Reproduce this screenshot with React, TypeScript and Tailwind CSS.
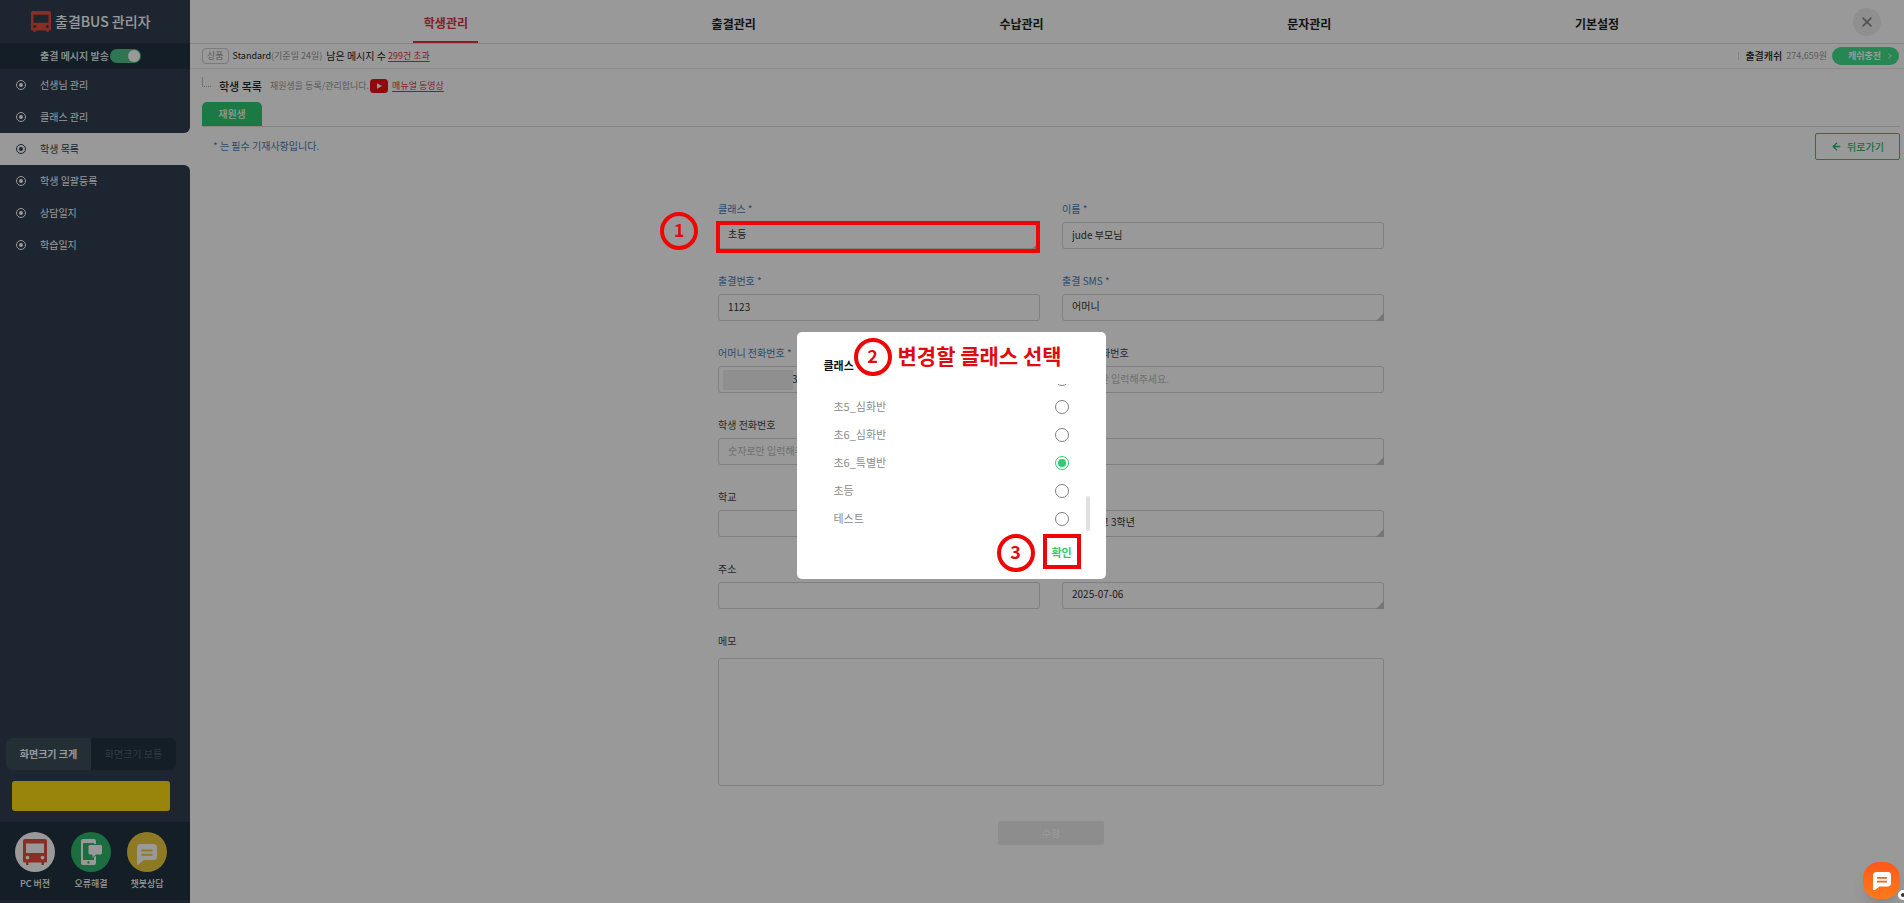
import React, { useState } from "react";
import { FiArrowLeft, FiChevronRight } from "react-icons/fi";
import { IoClose } from "react-icons/io5";

interface IField {
    id: string,
    label: string,
    kind: "text" | "select" | "masked",
    value?: string,
    placeholder?: string,
    required?: boolean,
    step?: string
}

const menuItems: string[] = ["학생관리", "출결관리", "수납관리", "문자관리", "기본설정"];

const sideItems = [
    { title: "선생님 관리", shape: "" },
    { title: "클래스 관리", shape: "rounded-br-md" },
    { title: "학생 목록", active: true, shape: "" },
    { title: "학생 일괄등록", shape: "rounded-tr-md" },
    { title: "상담일지", shape: "" },
    { title: "학습일지", shape: "" },
];

const fields: IField[] = [
    { id: "class", label: "클래스", kind: "select", value: "초등", required: true, step: "1" },
    { id: "name", label: "이름", kind: "text", value: "jude 부모님", required: true },
    { id: "number", label: "출결번호", kind: "text", value: "1123", required: true },
    { id: "sms", label: "출결 SMS", kind: "select", value: "어머니", required: true },
    { id: "mother", label: "어머니 전화번호", kind: "masked", value: "3", required: true },
    { id: "father", label: "아버지 전화번호", kind: "text", placeholder: "숫자로만 입력해주세요." },
    { id: "phone", label: "학생 전화번호", kind: "text", placeholder: "숫자로만 입력해주세요." },
    { id: "gender", label: "성별", kind: "select", value: "" },
    { id: "school", label: "학교", kind: "text" },
    { id: "grade", label: "학년", kind: "select", value: "고등학교 3학년" },
    { id: "address", label: "주소", kind: "text" },
    { id: "date", label: "등록일", kind: "select", value: "2025-07-06" },
];

const classes: string[] = ["", "초5_심화반", "초6_심화반", "초6_특별반", "초등", "테스트"];

const BusIcon = ({ className }: { className: string }) => (
    <svg viewBox="0 0 24 26" className={className} aria-hidden="true">
        <path
            fill="#e74c3c"
            fillRule="evenodd"
            d="M2 0h20a2 2 0 0 1 2 2v20a1.500 1.500 0 0 1-1.500 1.500H21V26h-2.500v-2.500h-13V26H3v-2.500H1.500A1.500 1.500 0 0 1 0 22V2a2 2 0 0 1 2-2zM3 4.500v9.500h18V4.500zM4.500 16.700a1.900 1.900 0 1 0 0 3.800 1.900 1.900 0 0 0 0-3.800zM19.500 16.700a1.900 1.900 0 1 0 0 3.800 1.900 1.900 0 0 0 0-3.800z"
        />
    </svg>
);

const PhoneIcon = () => (
    <svg viewBox="0 0 24 26" className="w-6" aria-hidden="true">
        <path
            fill="#fff"
            fillRule="evenodd"
            d="M4 0h11a2 2 0 0 1 2 2v22a2 2 0 0 1-2 2H4a2 2 0 0 1-2-2V2a2 2 0 0 1 2-2zM4 4v17h11V4zM9.500 22.300a1.200 1.200 0 1 0 0 2.400 1.200 1.200 0 0 0 0-2.400z"
        />
        <path fill="#fff" stroke="#2fb86c" d="M11 5.500h10.500a2 2 0 0 1 2 2V14a2 2 0 0 1-2 2H17l-4 3.500V16h-2a2 2 0 0 1-2-2V7.500a2 2 0 0 1 2-2z" />
    </svg>
);

const ChatIcon = ({ className, line }: { className: string, line: string }) => (
    <svg viewBox="0 0 20 21" className={className} aria-hidden="true">
        <path fill="#fff" d="M4 0h12.500A3.500 3.500 0 0 1 20 3.500v9a3.500 3.500 0 0 1-3.500 3.500H7l-5.600 4.600A.8.8 0 0 1 0 20V4a4 4 0 0 1 4-4z" />
        <path stroke={line} strokeWidth="2" d="M4.500 6.500h11M4.500 10.800h11" />
    </svg>
);

const Marker = ({ step }: { step: string }) => (
    <span className="flex size-[38px] items-center justify-center rounded-full border-4 border-[#f00505] pb-1 text-lg font-bold text-[#e00b12]">
        {step}
    </span>
);

const Field = ({ item }: { item: IField }) => {
    const box = "h-[27px] w-full appearance-none rounded-[3px] border border-[#d5d5d5] bg-white text-[#333] placeholder:text-[#bbb]";
    return (
        <div className="mb-6">
            <label
                htmlFor={item.id}
                className={`mb-[5px] block leading-4 ${item.required ? "text-[#4a7ab5]" : "text-[#444]"}`}
            >
                {item.label}{item.required && " *"}
            </label>
            <div className="relative">
                {item.kind === "select" ? (
                    <>
                        <select id={item.id} className={`${box} px-[9px] pb-1`}>
                            <option>{item.value}</option>
                        </select>
                        <svg viewBox="0 0 8 8" className="absolute right-0 bottom-0 w-2" aria-hidden="true">
                            <path fill="#c4c4c4" d="M8 0v8H0z" />
                        </svg>
                    </>
                ) : (
                    <input
                        id={item.id}
                        defaultValue={item.value}
                        placeholder={item.placeholder}
                        className={`${box} pr-[9px] pb-[2px] ${item.kind === "masked" ? "pl-[73px]" : "pl-[9px]"}`}
                    />
                )}
                {item.kind === "masked" && <div className="absolute top-1 left-[5px] h-5 w-[70px] bg-[#eee]"></div>}
                {item.step && (
                    <>
                        <div className="absolute -top-px right-0 -bottom-1 -left-[2px] z-20 border-4 border-[#f00505]"></div>
                        <div className="absolute -top-[10px] right-full z-20 mr-5"><Marker step={item.step} /></div>
                    </>
                )}
            </div>
        </div>
    );
};

const Sidebar = () => {
    return (
        <aside className="flex min-h-screen w-[190px] shrink-0 flex-col bg-white text-white">
            <div className="flex h-[43px] items-center gap-1 bg-[#2f3e50] pb-1 pl-[31px]">
                <BusIcon className="mt-1 w-5" />
                <h1 className="pt-[2px] text-sm font-medium">출결BUS 관리자</h1>
            </div>
            <div className="flex h-[26px] items-center bg-[#203340] pl-10 font-medium">
                <label htmlFor="send">출결 메시지 발송</label>
                <input
                    id="send"
                    type="checkbox"
                    defaultChecked
                    className="ml-px h-[14px] w-[31px] appearance-none rounded-full bg-[#4fc387] before:ml-[18px] before:block before:size-3 before:translate-y-px before:rounded-full before:bg-white"
                />
            </div>
            <nav>
                {
                    sideItems.map((item) => {
                        return (
                            <a
                                key={item.title}
                                href="#"
                                className={`flex h-8 items-center gap-[14px] pl-4 ${item.shape} ${item.active ? "bg-white text-[#2f3e50]" : "bg-[#2f3e50]"}`}
                            >
                                <span className="flex size-[10px] items-center justify-center rounded-full border border-current">
                                    <span className="size-1 rounded-full bg-current"></span>
                                </span>
                                {item.title}
                            </a>
                        )
                    })
                }
            </nav>
            <div className="flex flex-1 flex-col justify-end bg-[#2f3e50] pb-[3px]">
                <div className="mr-[14px] ml-[6px] flex h-8 overflow-hidden rounded-md">
                    <button className="flex-1 bg-[#3d4d59] font-bold">화면크기 크게</button>
                    <button className="flex-1 bg-[#203340] text-[#4f6070]">화면크기 보통</button>
                </div>
                <button className="mt-[11px] mr-5 mb-[11px] ml-3 h-[30px] rounded-[3px] bg-[#ffdd15]" aria-label="카카오"></button>
                <div className="flex h-[78px] gap-4 bg-[#203340] pt-[10px] pl-[15px] text-[9px] font-medium">
                    <a href="#" className="flex w-10 flex-col items-center gap-1">
                        <span className="flex size-10 items-center justify-center rounded-full bg-white"><BusIcon className="w-6" /></span>
                        <span className="whitespace-nowrap">PC 버젼</span>
                    </a>
                    <a href="#" className="flex w-10 flex-col items-center gap-1">
                        <span className="flex size-10 items-center justify-center rounded-full bg-[#2fb86c]"><PhoneIcon /></span>
                        <span className="whitespace-nowrap">오류해결</span>
                    </a>
                    <a href="#" className="flex w-10 flex-col items-center gap-1">
                        <span className="flex size-10 items-center justify-center rounded-full bg-[#edcc3e]">
                            <ChatIcon className="mt-1 w-5" line="#edcc3e" />
                        </span>
                        <span className="whitespace-nowrap">챗봇상담</span>
                    </a>
                </div>
            </div>
        </aside>
    );
};

const ClassDialog = () => {
    const [selected, setSelected] = useState("초6_특별반");
    return (
        <div className="fixed inset-0 z-10 flex items-center justify-center bg-black/40 pt-2 pr-[2px]">
            <div role="dialog" aria-label="클래스" className="relative flex h-[247px] w-[309px] flex-col rounded-[5px] bg-white pt-[25px] pl-[27px] text-[11px]">
                <h2 className="font-bold leading-4 text-[#111]">클래스</h2>
                <div className="mt-[11px] flex h-[149px]">
                    <div className="flex flex-1 flex-col justify-end overflow-hidden pl-[10px] text-[#8c8c8c]">
                        {
                            classes.map((name) => {
                                return (
                                    <label key={name} className="flex h-7 shrink-0 items-center justify-between">
                                        <span className="pb-[2px]">{name}</span>
                                        <input
                                            type="radio"
                                            name="class-name"
                                            checked={selected === name}
                                            onChange={() => setSelected(name)}
                                            className="size-[14px] appearance-none rounded-full border border-[#808080] bg-clip-content p-[2px] checked:border-[#2ecc71] checked:bg-[#2ecc71]"
                                        />
                                    </label>
                                )
                            })
                        }
                    </div>
                    <div className="mr-4 ml-[17px] flex w-1 flex-col justify-end pb-[2px]">
                        <div className="h-[35px] rounded-full bg-[#e0e0e0]"></div>
                    </div>
                </div>
                <div className="mr-[25px] mt-px flex justify-end">
                    <button className="h-[35px] w-[38px] border-4 border-[#f00505] font-bold text-[#2ecc71]">확인</button>
                </div>
                <div className="absolute top-[6px] left-[57px] flex items-center gap-[6px]">
                    <Marker step="2" />
                    <p className="pb-1 text-[21px] font-bold whitespace-nowrap text-[#e00b12]">변경할 클래스 선택</p>
                </div>
                <div className="absolute right-[71px] bottom-[7px]"><Marker step="3" /></div>
            </div>
        </div>
    );
};

export default function App() {
    return (
        <div className="flex min-h-screen bg-white font-['Noto_Sans_CJK_KR',sans-serif] text-[10px] leading-4 text-[#222]">
            <Sidebar />
            <main className="min-w-0 flex-1">
                <header className="flex h-11 border-b border-[#e0e0e0]">
                    <nav className="flex flex-1 pl-28">
                        {
                            menuItems.map((item, index) => {
                                return (
                                    <div key={item} className="flex flex-1 justify-center text-xs font-bold">
                                        <a
                                            href="#"
                                            className={index === 0 ? "flex w-[65px] items-center justify-center border-b-2 border-[#dc3545] pt-1 text-[#dc3545]" : "flex items-center pt-1"}
                                        >
                                            {item}
                                        </a>
                                    </div>
                                )
                            })
                        }
                    </nav>
                    <div className="flex w-[163px] items-center justify-end pr-[23px]">
                        <button aria-label="닫기" className="flex size-7 items-center justify-center rounded-full bg-[#efefef] text-[#888]">
                            <IoClose size={18} />
                        </button>
                    </div>
                </header>
                <div className="flex h-[25px] items-center justify-between border-b border-[#eaeaea] pr-[5px] pl-3">
                    <div className="flex items-center">
                        <span className="mr-1 rounded border border-[#ccc] px-1 text-[9px] leading-[14px] text-[#999]">상품</span>
                        <span className="text-[9px]">Standard</span>
                        <span className="text-[9px] text-[#999]">(기준일 24일)</span>
                        <span className="mr-[2px] ml-1">남은 메시지 수</span>
                        <a href="#" className="text-[9px] text-[#dc3545] underline underline-offset-2">299건 초과</a>
                    </div>
                    <div className="flex items-center">
                        <span className="mr-[6px] h-2 w-px bg-[#ddd]"></span>
                        <span className="font-medium">출결캐쉬</span>
                        <span className="mr-[5px] ml-1 text-[9px] text-[#999]">274,659원</span>
                        <button className="flex h-[18px] w-[67px] items-center justify-end gap-1 rounded-full bg-[#42e28a] pr-1 text-[9px] font-bold text-white">
                            캐쉬충전 <FiChevronRight size={10} />
                        </button>
                    </div>
                </div>
                <div className="pr-1 pl-3">
                    <div className="flex h-[33px] items-center">
                        <span className="mr-2 mb-2 h-[10px] w-[9px] border-b border-l border-b-[#aaa] border-l-[#bbb] [border-bottom-style:dotted]"></span>
                        <h2 className="mr-2 text-[11px] font-medium">학생 목록</h2>
                        <span className="mr-px text-[9px] text-[#999]">재원생을 등록/관리합니다.</span>
                        <svg viewBox="0 0 18 14" className="mr-1 w-[18px]" aria-hidden="true">
                            <rect width="18" height="14" rx="3.500" fill="#f00f14" />
                            <path fill="#fff" d="M7 4.300v5.400L12 7z" />
                        </svg>
                        <a href="#" className="text-[9px] text-[#dc3545] underline underline-offset-2">매뉴얼 동영상</a>
                    </div>
                    <div className="flex h-[25px] border-b border-[#ddd]">
                        <button className="w-[60px] rounded-t-[5px] bg-[#2ecc71] pb-px font-medium text-white">재원생</button>
                    </div>
                    <div className="flex items-center justify-between pt-[6px]">
                        <p className="pb-[2px] pl-[11px] text-[#4a7ab5]">* 는 필수 기재사항입니다.</p>
                        <button className="flex h-[27px] w-[85px] items-center justify-center gap-[5px] rounded-[2px] border border-[#2ecc71] font-medium text-[#30b868]">
                            <FiArrowLeft size={11} strokeWidth={3} /> 뒤로가기
                        </button>
                    </div>
                    <form className="mx-auto mt-10 w-full max-w-[666px] pt-px">
                        <div className="grid grid-cols-2 gap-x-[22px]">
                            {
                                fields.map((item) => <Field key={item.id} item={item} />)
                            }
                        </div>
                        <label htmlFor="memo" className="mb-[9px] block text-[#444]">메모</label>
                        <textarea id="memo" className="block h-32 w-full resize-none rounded-[3px] border border-[#d5d5d5]"></textarea>
                        <button type="button" disabled className="mx-auto mt-[35px] block h-6 w-[106px] rounded-[2px] bg-[#ebebeb] font-medium text-white">
                            수정
                        </button>
                    </form>
                </div>
            </main>
            <ClassDialog />
            <button aria-label="채팅 상담" className="fixed right-1 bottom-1 z-30 flex size-[37px] items-center justify-center rounded-2xl bg-linear-to-b from-[#ff571a] to-[#ff7a1a] shadow-lg">
                <ChatIcon className="mt-px w-[18px]" line="#f0641a" />
            </button>
            <span className="fixed -right-1 bottom-[3px] z-30 size-[10px] rounded-full border-3 border-white bg-[#333]"></span>
        </div>
    );
}
